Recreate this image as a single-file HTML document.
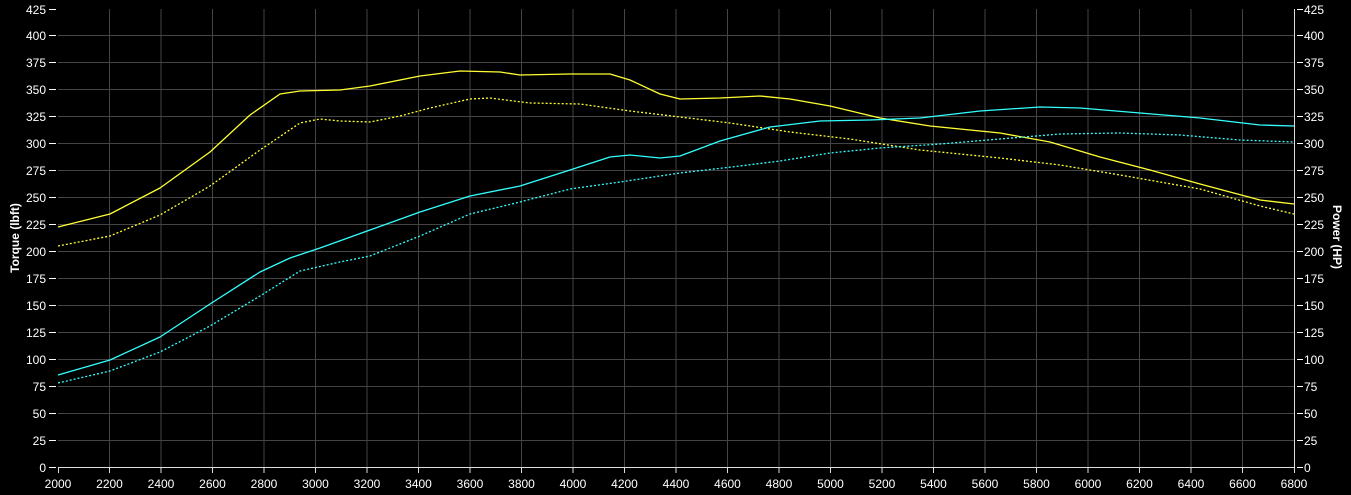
<!DOCTYPE html>
<html><head><style>body{margin:0;background:#000}svg{display:block}text{font-family:"Liberation Sans",sans-serif;font-size:12px;fill:#fff}</style></head><body>
<svg width="1351" height="495" viewBox="0 0 1351 495">
<rect width="1351" height="495" fill="#000"/>
<g stroke="#444" stroke-width="1">
<line x1="109.5" y1="9" x2="109.5" y2="467"/><line x1="161" y1="9" x2="161" y2="467"/><line x1="212.5" y1="9" x2="212.5" y2="467"/><line x1="264" y1="9" x2="264" y2="467"/><line x1="315.5" y1="9" x2="315.5" y2="467"/><line x1="367" y1="9" x2="367" y2="467"/><line x1="418.5" y1="9" x2="418.5" y2="467"/><line x1="470" y1="9" x2="470" y2="467"/><line x1="521.5" y1="9" x2="521.5" y2="467"/><line x1="573" y1="9" x2="573" y2="467"/><line x1="624.5" y1="9" x2="624.5" y2="467"/><line x1="676" y1="9" x2="676" y2="467"/><line x1="727.5" y1="9" x2="727.5" y2="467"/><line x1="779" y1="9" x2="779" y2="467"/><line x1="830.5" y1="9" x2="830.5" y2="467"/><line x1="882" y1="9" x2="882" y2="467"/><line x1="933.5" y1="9" x2="933.5" y2="467"/><line x1="985" y1="9" x2="985" y2="467"/><line x1="1036.5" y1="9" x2="1036.5" y2="467"/><line x1="1088" y1="9" x2="1088" y2="467"/><line x1="1139.5" y1="9" x2="1139.5" y2="467"/><line x1="1191" y1="9" x2="1191" y2="467"/><line x1="1242.5" y1="9" x2="1242.5" y2="467"/>
<line x1="58" y1="440.5" x2="1294" y2="440.5"/><line x1="58" y1="413.5" x2="1294" y2="413.5"/><line x1="58" y1="386.5" x2="1294" y2="386.5"/><line x1="58" y1="359.5" x2="1294" y2="359.5"/><line x1="58" y1="332.5" x2="1294" y2="332.5"/><line x1="58" y1="305.5" x2="1294" y2="305.5"/><line x1="58" y1="278.5" x2="1294" y2="278.5"/><line x1="58" y1="251.5" x2="1294" y2="251.5"/><line x1="58" y1="224.5" x2="1294" y2="224.5"/><line x1="58" y1="197.5" x2="1294" y2="197.5"/><line x1="58" y1="170.5" x2="1294" y2="170.5"/><line x1="58" y1="143.5" x2="1294" y2="143.5"/><line x1="58" y1="116.5" x2="1294" y2="116.5"/><line x1="58" y1="89.5" x2="1294" y2="89.5"/><line x1="58" y1="62.5" x2="1294" y2="62.5"/><line x1="58" y1="35.5" x2="1294" y2="35.5"/>
</g>
<g stroke="#ddd" stroke-width="1">
<line x1="58" y1="467.5" x2="1295" y2="467.5"/><line x1="1294.5" y1="9" x2="1294.5" y2="473"/>
<line x1="58.5" y1="467" x2="58.5" y2="473"/><line x1="109.5" y1="467" x2="109.5" y2="473"/><line x1="161" y1="467" x2="161" y2="473"/><line x1="212.5" y1="467" x2="212.5" y2="473"/><line x1="264" y1="467" x2="264" y2="473"/><line x1="315.5" y1="467" x2="315.5" y2="473"/><line x1="367" y1="467" x2="367" y2="473"/><line x1="418.5" y1="467" x2="418.5" y2="473"/><line x1="470" y1="467" x2="470" y2="473"/><line x1="521.5" y1="467" x2="521.5" y2="473"/><line x1="573" y1="467" x2="573" y2="473"/><line x1="624.5" y1="467" x2="624.5" y2="473"/><line x1="676" y1="467" x2="676" y2="473"/><line x1="727.5" y1="467" x2="727.5" y2="473"/><line x1="779" y1="467" x2="779" y2="473"/><line x1="830.5" y1="467" x2="830.5" y2="473"/><line x1="882" y1="467" x2="882" y2="473"/><line x1="933.5" y1="467" x2="933.5" y2="473"/><line x1="985" y1="467" x2="985" y2="473"/><line x1="1036.5" y1="467" x2="1036.5" y2="473"/><line x1="1088" y1="467" x2="1088" y2="473"/><line x1="1139.5" y1="467" x2="1139.5" y2="473"/><line x1="1191" y1="467" x2="1191" y2="473"/><line x1="1242.5" y1="467" x2="1242.5" y2="473"/>
</g>
<g stroke="#fff" stroke-width="1">
<line x1="49" y1="467.5" x2="56" y2="467.5"/><line x1="49" y1="440.5" x2="56" y2="440.5"/><line x1="49" y1="413.5" x2="56" y2="413.5"/><line x1="49" y1="386.5" x2="56" y2="386.5"/><line x1="49" y1="359.5" x2="56" y2="359.5"/><line x1="49" y1="332.5" x2="56" y2="332.5"/><line x1="49" y1="305.5" x2="56" y2="305.5"/><line x1="49" y1="278.5" x2="56" y2="278.5"/><line x1="49" y1="251.5" x2="56" y2="251.5"/><line x1="49" y1="224.5" x2="56" y2="224.5"/><line x1="49" y1="197.5" x2="56" y2="197.5"/><line x1="49" y1="170.5" x2="56" y2="170.5"/><line x1="49" y1="143.5" x2="56" y2="143.5"/><line x1="49" y1="116.5" x2="56" y2="116.5"/><line x1="49" y1="89.5" x2="56" y2="89.5"/><line x1="49" y1="62.5" x2="56" y2="62.5"/><line x1="49" y1="35.5" x2="56" y2="35.5"/><line x1="49" y1="9.5" x2="56" y2="9.5"/>
<line x1="1297" y1="467.5" x2="1303" y2="467.5"/><line x1="1297" y1="440.5" x2="1303" y2="440.5"/><line x1="1297" y1="413.5" x2="1303" y2="413.5"/><line x1="1297" y1="386.5" x2="1303" y2="386.5"/><line x1="1297" y1="359.5" x2="1303" y2="359.5"/><line x1="1297" y1="332.5" x2="1303" y2="332.5"/><line x1="1297" y1="305.5" x2="1303" y2="305.5"/><line x1="1297" y1="278.5" x2="1303" y2="278.5"/><line x1="1297" y1="251.5" x2="1303" y2="251.5"/><line x1="1297" y1="224.5" x2="1303" y2="224.5"/><line x1="1297" y1="197.5" x2="1303" y2="197.5"/><line x1="1297" y1="170.5" x2="1303" y2="170.5"/><line x1="1297" y1="143.5" x2="1303" y2="143.5"/><line x1="1297" y1="116.5" x2="1303" y2="116.5"/><line x1="1297" y1="89.5" x2="1303" y2="89.5"/><line x1="1297" y1="62.5" x2="1303" y2="62.5"/><line x1="1297" y1="35.5" x2="1303" y2="35.5"/><line x1="1297" y1="9.5" x2="1303" y2="9.5"/>
</g>
<g text-anchor="end">
<text x="46" y="472">0</text><text x="46" y="445">25</text><text x="46" y="418">50</text><text x="46" y="391">75</text><text x="46" y="364">100</text><text x="46" y="337">125</text><text x="46" y="310">150</text><text x="46" y="283">175</text><text x="46" y="256">200</text><text x="46" y="229">225</text><text x="46" y="202">250</text><text x="46" y="175">275</text><text x="46" y="148">300</text><text x="46" y="121">325</text><text x="46" y="94">350</text><text x="46" y="67">375</text><text x="46" y="40">400</text><text x="46" y="14">425</text>
</g>
<g>
<text x="1304" y="472">0</text><text x="1304" y="445">25</text><text x="1304" y="418">50</text><text x="1304" y="391">75</text><text x="1304" y="364">100</text><text x="1304" y="337">125</text><text x="1304" y="310">150</text><text x="1304" y="283">175</text><text x="1304" y="256">200</text><text x="1304" y="229">225</text><text x="1304" y="202">250</text><text x="1304" y="175">275</text><text x="1304" y="148">300</text><text x="1304" y="121">325</text><text x="1304" y="94">350</text><text x="1304" y="67">375</text><text x="1304" y="40">400</text><text x="1304" y="14">425</text>
</g>
<g text-anchor="middle">
<text x="58" y="488">2000</text><text x="109.5" y="488">2200</text><text x="161" y="488">2400</text><text x="212.5" y="488">2600</text><text x="264" y="488">2800</text><text x="315.5" y="488">3000</text><text x="367" y="488">3200</text><text x="418.5" y="488">3400</text><text x="470" y="488">3600</text><text x="521.5" y="488">3800</text><text x="573" y="488">4000</text><text x="624.5" y="488">4200</text><text x="676" y="488">4400</text><text x="727.5" y="488">4600</text><text x="779" y="488">4800</text><text x="830.5" y="488">5000</text><text x="882" y="488">5200</text><text x="933.5" y="488">5400</text><text x="985" y="488">5600</text><text x="1036.5" y="488">5800</text><text x="1088" y="488">6000</text><text x="1139.5" y="488">6200</text><text x="1191" y="488">6400</text><text x="1242.5" y="488">6600</text><text x="1294" y="488">6800</text>
</g>
<text x="0" y="0" text-anchor="middle" font-weight="bold" transform="translate(19,238) rotate(-90)">Torque (lbft)</text>
<text x="0" y="0" text-anchor="middle" font-weight="bold" transform="translate(1333,237) rotate(90)">Power (HP)</text>
<g fill="none" stroke-width="1.3" stroke-linejoin="round">
<polyline stroke="#ffff33" points="58,227 110,214 160,188 210,152 250,115 280,94 300,91 340,90 370,86 420,76 460,71 500,72 520,75 570,74 610,74 630,80 660,94 680,99 720,98 760,96 790,99 830,106 880,118 930,126 1000,133 1050,142 1100,157 1150,170 1200,184 1260,200 1294,204"/>
<polyline stroke="#ffff33" stroke-dasharray="2,2" points="58,246 110,236 160,215 210,186 260,150 300,123 320,119 340,121 370,122 400,116 430,108 470,99 490,98 530,103 580,104 630,111 680,117 730,123 790,132 850,139 920,150 1000,158 1060,165 1120,175 1200,189 1260,206 1294,214"/>
<polyline stroke="#33ffff" points="58,375 110,360 160,337 210,304 260,272 290,258 320,248 370,230 420,212 470,196 520,186 570,170 610,157 630,155 660,158 680,156 720,141 770,127 820,121 870,120 920,118 980,111 1040,107 1080,108 1140,113 1200,118 1260,125 1294,126"/>
<polyline stroke="#33ffff" stroke-dasharray="2,2" points="58,383 110,371 160,352 210,326 260,296 300,271 340,262 370,256 420,236 470,214 520,202 570,189 620,182 680,173 740,166 780,161 830,153 880,148 940,144 1000,139 1060,134 1120,133 1180,135 1240,140 1294,142"/>
</g>
</svg>
</body></html>
